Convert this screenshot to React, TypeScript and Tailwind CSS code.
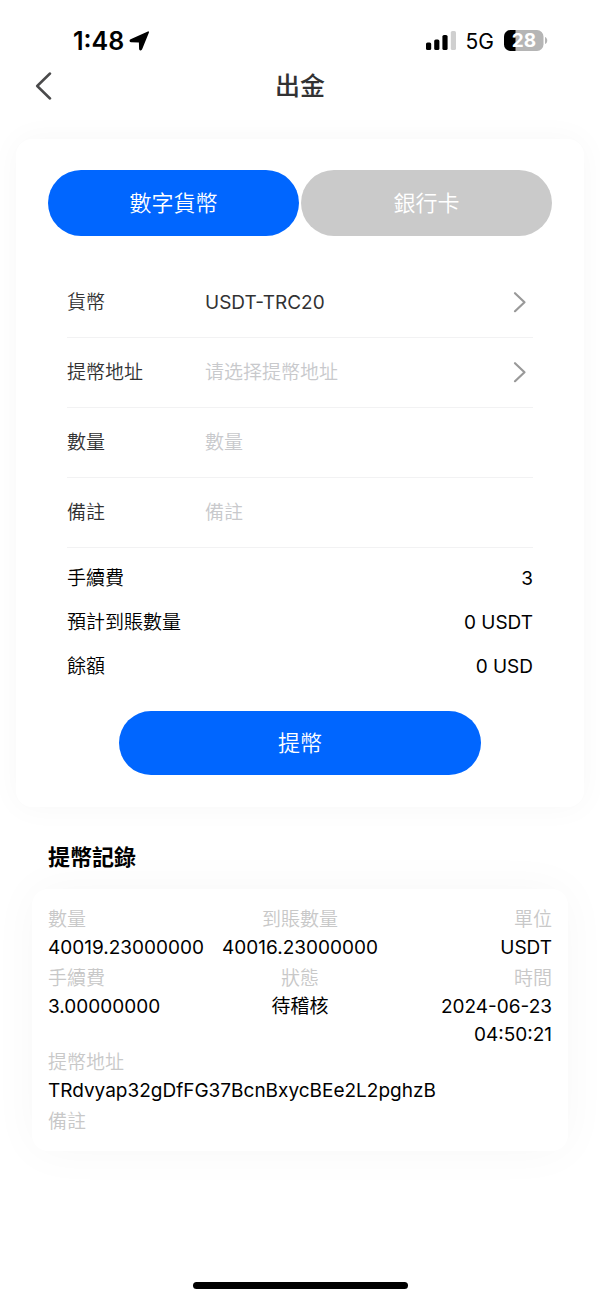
import { useState, type ReactNode } from "react";

function StatusBar() {
  return (
    <div className="flex h-[60px] items-center justify-between pt-[22px] pr-[52px] pl-[73px] font-normal text-black">
      <div className="flex items-center gap-[5px]">
        <span className="text-[25px] leading-8 font-semibold">1:48</span>
        <svg className="h-5 w-[22px]" viewBox="0 0 22 20" fill="currentColor" stroke="currentColor" strokeWidth="1.6" strokeLinejoin="round" aria-hidden="true">
          <path d="M19.2 1.2L12.4 18C12 19 10.9 18.8 10.9 17.8L10.7 11.6C10.7 10.9 10.4 10.6 9.7 10.6L2.2 10.5C1.2 10.4 1 9.3 1.9 8.9Z" />
        </svg>
      </div>
      <div className="flex items-center">
        <svg className="h-5 w-[30px]" viewBox="0 0 30 20" aria-hidden="true">
          <rect x="0" y="11.5" width="5.2" height="7.5" rx="1.6" />
          <rect x="8.2" y="8.5" width="5.2" height="10.5" rx="1.6" />
          <rect x="16.4" y="4" width="5.2" height="15" rx="1.6" />
          <rect x="24.8" y="0" width="5.2" height="19" rx="1.6" fill="#cfcfcf" />
        </svg>
        <span className="ml-[10px] pt-[2px] text-[21px] leading-7">5G</span>
        <svg className="ml-[10px] h-[22px] w-11" viewBox="0 0 44 22" aria-hidden="true">
          <clipPath id="battery">
            <rect x="0" y="0" width="39.5" height="21" rx="6.5" />
          </clipPath>
          <g clipPath="url(#battery)">
            <rect width="40" height="22" fill="#b5b5b5" />
            <rect width="11.5" height="22" fill="#000" />
          </g>
          <path d="M41 7C44 8 44 13 41 14Z" fill="#b5b5b5" />
          <text x="20" y="17.3" textAnchor="middle" fontSize="19" fontWeight="700" fill="#fff">
            28
          </text>
        </svg>
      </div>
    </div>
  );
}

function Chevron() {
  return (
    <svg className="pointer-events-none mr-[6px] h-6 w-4 shrink-0" viewBox="0 0 16 24" fill="none" stroke="#999" strokeWidth="2.2" strokeLinecap="round" strokeLinejoin="round" aria-hidden="true">
      <path d="M4 2.2L13.5 11.2L4 20.2" />
    </svg>
  );
}

function Field({ id, label, children }: { id: string; label: string; children: ReactNode }) {
  return (
    <div className="flex h-[70px] items-center border-b border-[#f2f2f3] text-[#323233]">
      <label htmlFor={id} className="w-[138px] shrink-0">
        {label}
      </label>
      {children}
    </div>
  );
}

function Summary({ label, value }: { label: string; value: string }) {
  return (
    <div className="flex h-11 items-center justify-between">
      <dt>{label}</dt>
      <dd className="font-normal">{value}</dd>
    </div>
  );
}

function Entry({ label, value, className }: { label: string; value?: string; className?: string }) {
  return (
    <div className={className}>
      <dt className="text-[#c8c8c8]">{label}</dt>
      {value && <dd className="font-normal">{value}</dd>}
    </div>
  );
}

const control = "h-12 w-full min-w-0 flex-1 appearance-none bg-transparent outline-none placeholder:text-[#c8c9cc]";

export default function App() {
  const [tab, setTab] = useState("crypto");
  const [address, setAddress] = useState("");
  const tabs = [
    { id: "crypto", name: "數字貨幣" },
    { id: "bank", name: "銀行卡" },
  ];

  return (
    <div lang="zh-Hant" className="flex min-h-screen flex-col bg-white font-['Inter','Noto_Sans_CJK_TC',sans-serif] text-[19px] leading-7 font-[350] text-black">
      <StatusBar />
      <header className="grid h-[52px] grid-cols-[1fr_auto_1fr] items-center px-[34px]">
        <button type="button" aria-label="返回" className="w-5">
          <svg className="h-7 w-5" viewBox="0 0 20 28" fill="none" stroke="#4a4a4b" strokeWidth="2.5" strokeLinecap="round" strokeLinejoin="round" aria-hidden="true">
            <path d="M16 1.5L3.2 14L16 26.5" />
          </svg>
        </button>
        <h1 className="text-[25px] leading-9 font-medium text-[#323233]">出金</h1>
      </header>

      <main className="flex-1">
        <section className="mx-4 mt-[27px] rounded-2xl bg-white px-8 pt-[31px] pb-8 shadow-[0_0_32px_rgba(0,0,0,0.035)]">
          <div className="grid grid-cols-2 gap-[2px] text-[22px]">
            {tabs.map((t) => (
              <button
                key={t.id}
                type="button"
                aria-pressed={tab === t.id}
                onClick={() => setTab(t.id)}
                className={`h-[66px] rounded-full text-white ${tab === t.id ? "bg-[#0066ff]" : "bg-[#cacaca]"}`}
              >
                {t.name}
              </button>
            ))}
          </div>

          <form className="px-[19px] pt-8" onSubmit={(e) => e.preventDefault()}>
            <Field id="currency" label="貨幣">
              <select id="currency" className={`${control} font-normal`}>
                <option>USDT-TRC20</option>
              </select>
              <Chevron />
            </Field>
            <Field id="address" label="提幣地址">
              <select
                id="address"
                value={address}
                onChange={(e) => setAddress(e.target.value)}
                className={`${control} text-[#c8c9cc]`}
              >
                <option value="">请选择提幣地址</option>
              </select>
              <Chevron />
            </Field>
            <Field id="amount" label="數量">
              <input id="amount" inputMode="decimal" placeholder="數量" className={control} />
            </Field>
            <Field id="remark" label="備註">
              <input id="remark" placeholder="備註" className={control} />
            </Field>

            <dl className="pt-[9px]">
              <Summary label="手續費" value="3" />
              <Summary label="預計到賬數量" value="0 USDT" />
              <Summary label="餘額" value="0 USD" />
            </dl>

            <div className="mt-[22px] px-[52px]">
              <button type="submit" className="h-16 w-full rounded-full bg-[#0066ff] text-[22px] text-white">
                提幣
              </button>
            </div>
          </form>
        </section>

        <section className="mt-8 px-8">
          <h2 className="px-4 text-[22px] leading-9 font-bold">提幣記錄</h2>
          <dl className="mt-[14px] grid grid-cols-3 rounded-2xl bg-white px-4 pt-[17px] pb-[15px] shadow-[0_0_48px_rgba(0,0,0,0.035)]">
            <Entry label="數量" value="40019.23000000" />
            <Entry label="到賬數量" value="40016.23000000" className="text-center" />
            <Entry label="單位" value="USDT" className="text-right" />
            <Entry label="手續費" value="3.00000000" className="mt-[3px]" />
            <Entry label="狀態" value="待稽核" className="mt-[3px] text-center" />
            <Entry label="時間" value="2024-06-23 04:50:21" className="mt-[3px] text-right" />
            <Entry label="提幣地址" value="TRdvyap32gDfFG37BcnBxycBEe2L2pghzB" className="col-span-3" />
            <Entry label="備註" className="col-span-3 mt-[3px]" />
          </dl>
        </section>
      </main>

      <div className="flex justify-center pb-[11px]">
        <div className="h-[7px] w-[215px] rounded-full bg-black" />
      </div>
    </div>
  );
}
